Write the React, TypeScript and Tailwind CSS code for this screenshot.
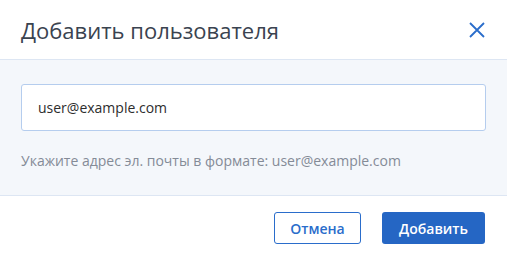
import React from "react";

export default function App() {
  return (
    <div className="w-[507px] h-[256px] bg-white overflow-hidden" style={{ fontFamily: '"Open Sans", "Noto Sans", sans-serif' }}>
      <div className="h-[60px] flex items-center justify-between pl-[21px] pr-[22px] border-b border-[#dde6f3]">
        <div className="text-[22px] text-[#3a4350] leading-none">Добавить пользователя</div>
        <svg width="16" height="16" viewBox="0 0 16 16" className="mt-[1px]">
          <path d="M1 1 L15 15 M15 1 L1 15" stroke="#2a6dcb" strokeWidth="1.8" fill="none" />
        </svg>
      </div>
      <div className="bg-[#f4f7fb] h-[136px] pt-[24px] px-[21px] border-b border-[#dde6f3]">
        <div className="h-[47px] bg-white border border-[#b5cdee] rounded-[3px] flex items-center pl-[16px] text-[14px] text-[#2d2d2d]">
          user@example.com
        </div>
        <div className="mt-[19px] text-[14px] text-[#848b97]">Укажите адрес эл. почты в формате: user@example.com</div>
      </div>
      <div className="flex justify-end gap-[21px] pt-[16px] pr-[22px]">
        <button className="w-[87px] h-[32px] border border-[#2a6dcb] rounded-[3px] text-[#2a6dcb] text-[14px] font-semibold bg-white">
          Отмена
        </button>
        <button className="w-[103px] h-[32px] rounded-[3px] bg-[#2566c4] text-white text-[14px] font-semibold">
          Добавить
        </button>
      </div>
    </div>
  );
}
